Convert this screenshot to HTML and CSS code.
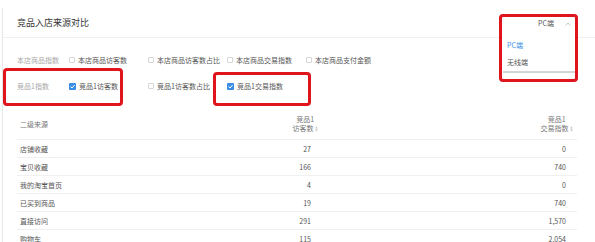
FILE: index.html
```html
<!DOCTYPE html>
<html lang="zh-CN">
<head>
  <meta charset="UTF-8" />
  <meta name="viewport" content="width=device-width, initial-scale=1.0" />
  <title>竞品入店来源对比</title>
  <link rel="stylesheet" href="styles.css">
</head>
<body>
  <section class="panel">
    <header class="panel-head">
      <h1>竞品入店来源对比</h1>
      <button class="select" aria-haspopup="listbox" aria-expanded="true">
        <span>PC端</span>
        <svg class="chevron" width="6" height="4" viewBox="0 0 6 4" aria-hidden="true">
          <path d="M0.5 3.5 L3 1 L5.5 3.5" fill="none" stroke="#b8b8b8" stroke-width="0.8" />
        </svg>
      </button>
    </header>

    <ul class="menu" role="listbox">
      <li class="active" role="option">PC端</li>
      <li role="option">无线端</li>
    </ul>

    <div class="filters">
      <div class="filter-row">
        <span class="group-label">本店商品指数</span>
        <label class="check"><span class="box"></span>本店商品访客数</label>
        <label class="check"><span class="box"></span>本店商品访客数占比</label>
        <label class="check"><span class="box"></span>本店商品交易指数</label>
        <label class="check"><span class="box"></span>本店商品支付金额</label>
      </div>
      <div class="filter-row">
        <span class="group-label">竞品1指数</span>
        <label class="check checked"><span class="box"><svg width="7" height="7" viewBox="0 0 7 7"><path d="M1.5 3.6 L3 5 L5.6 2" fill="none" stroke="#fff" stroke-width="1" /></svg></span>竞品1访客数</label>
        <label class="check"><span class="box"></span>竞品1访客数占比</label>
        <label class="check checked"><span class="box"><svg width="7" height="7" viewBox="0 0 7 7"><path d="M1.5 3.6 L3 5 L5.6 2" fill="none" stroke="#fff" stroke-width="1" /></svg></span>竞品1交易指数</label>
      </div>
    </div>

    <div class="table">
      <div class="row head">
        <div>二级来源</div>
        <div class="num"><span class="th">竞品1<br>访客数 <svg class="sorter" width="3" height="6" viewBox="0 0 3 6"><path d="M1.5 0.3 L2.8 2.4 L0.2 2.4Z M1.5 5.7 L2.8 3.6 L0.2 3.6Z" fill="#c4c4c4" /></svg></span></div>
        <div class="num"><span class="th">竞品1<br>交易指数 <svg class="sorter" width="3" height="6" viewBox="0 0 3 6"><path d="M1.5 0.3 L2.8 2.4 L0.2 2.4Z M1.5 5.7 L2.8 3.6 L0.2 3.6Z" fill="#c4c4c4" /></svg></span></div>
      </div>
      <div class="row"><div>店铺收藏</div><div class="num">27</div><div class="num">0</div></div>
      <div class="row"><div>宝贝收藏</div><div class="num">166</div><div class="num">740</div></div>
      <div class="row"><div>我的淘宝首页</div><div class="num">4</div><div class="num">0</div></div>
      <div class="row"><div>已买到商品</div><div class="num">19</div><div class="num">740</div></div>
      <div class="row"><div>直接访问</div><div class="num">291</div><div class="num">1,570</div></div>
      <div class="row"><div>购物车</div><div class="num">115</div><div class="num">2,054</div></div>
    </div>

    <!-- red annotation frames -->
    <span class="mark mark-select"></span>
    <span class="mark mark-index"></span>
    <span class="mark mark-trade"></span>
  </section>
</body>
</html>
```

FILE: styles.css
```css
:root {
  --text: #555;
  --muted: #a8a8a8;
  --line: #f0f0f0;
  --blue: #3a8ee6;
  --mark: #e0141c;
}
* {
  box-sizing: border-box;
  margin: 0;
  padding: 0;
}
body {
  background: #fff;
  color: var(--text);
  font-family: "Noto Sans CJK SC", "Noto Sans", sans-serif;
  font-size: 7px;
  overflow: hidden;
}
.panel {
  position: relative;
  margin: 8px 0 0 2px;
  border-left: 1px solid #e6e6e6;
  height: 240px;
}
.panel-head {
  display: flex;
  justify-content: space-between;
  align-items: flex-start;
  height: 30px;
  padding: 9px 24px 0 14px;
  border-bottom: 1px solid var(--line);
}
.panel-head h1 {
  font-size: 9px;
  line-height: 11px;
  font-weight: 400;
  color: #333;
}
.select {
  display: flex;
  align-items: center;
  gap: 11px;
  background: none;
  border: none;
  font: inherit;
  color: #555;
  line-height: 11px;
  margin-top: 1px;
}
.menu {
  position: absolute;
  left: 500px;
  top: 28px;
  width: 73px;
  list-style: none;
  background: #fff;
  padding-top: 1px;
  border-bottom: 2px solid #d4d4d4;
}
.menu li {
  height: 17px;
  line-height: 17px;
  padding-left: 4px;
  color: #555;
}
.menu li.active {
  color: var(--blue);
}
.filters {
  padding: 9px 0 10px 14px;
}
.filter-row {
  display: grid;
  grid-template-columns: 52px repeat(4, 79px);
  align-items: center;
  height: 26px;
}
.group-label {
  color: var(--muted);
}
.check {
  display: flex;
  align-items: center;
  gap: 3px;
  color: #555;
}
.box {
  display: inline-flex;
  width: 6px;
  height: 6px;
  border: 1px solid #d6d6d6;
  border-radius: 1px;
}
.check.checked .box {
  width: 7px;
  height: 7px;
  border: none;
  background: var(--blue);
}
.table {
  margin: 0 18px 0 14px;
}
.row {
  display: grid;
  grid-template-columns: 150px 148px 1fr;
  align-items: center;
  height: 18px;
  padding: 0 11px 0 3px;
  border-bottom: 1px solid var(--line);
}
.row.head {
  height: 31px;
  line-height: 9px;
  padding-right: 4px;
  color: #777;
}
.row.head .num {
  padding-right: 0;
}
.num {
  text-align: right;
}
.row:not(.head) .num:nth-child(2) {
  padding-right: 7px;
}
.th {
  display: inline-block;
  text-align: center;
}
.sorter {
  vertical-align: -1px;
}
.mark {
  position: absolute;
  border: 3px solid var(--mark);
  border-radius: 4px;
}
.mark-select {
  left: 496px;
  top: 6px;
  width: 79px;
  height: 68px;
}
.mark-index {
  left: 0;
  top: 60px;
  width: 120px;
  height: 38px;
}
.mark-trade {
  left: 210px;
  top: 64px;
  width: 98px;
  height: 34px;
}
```
